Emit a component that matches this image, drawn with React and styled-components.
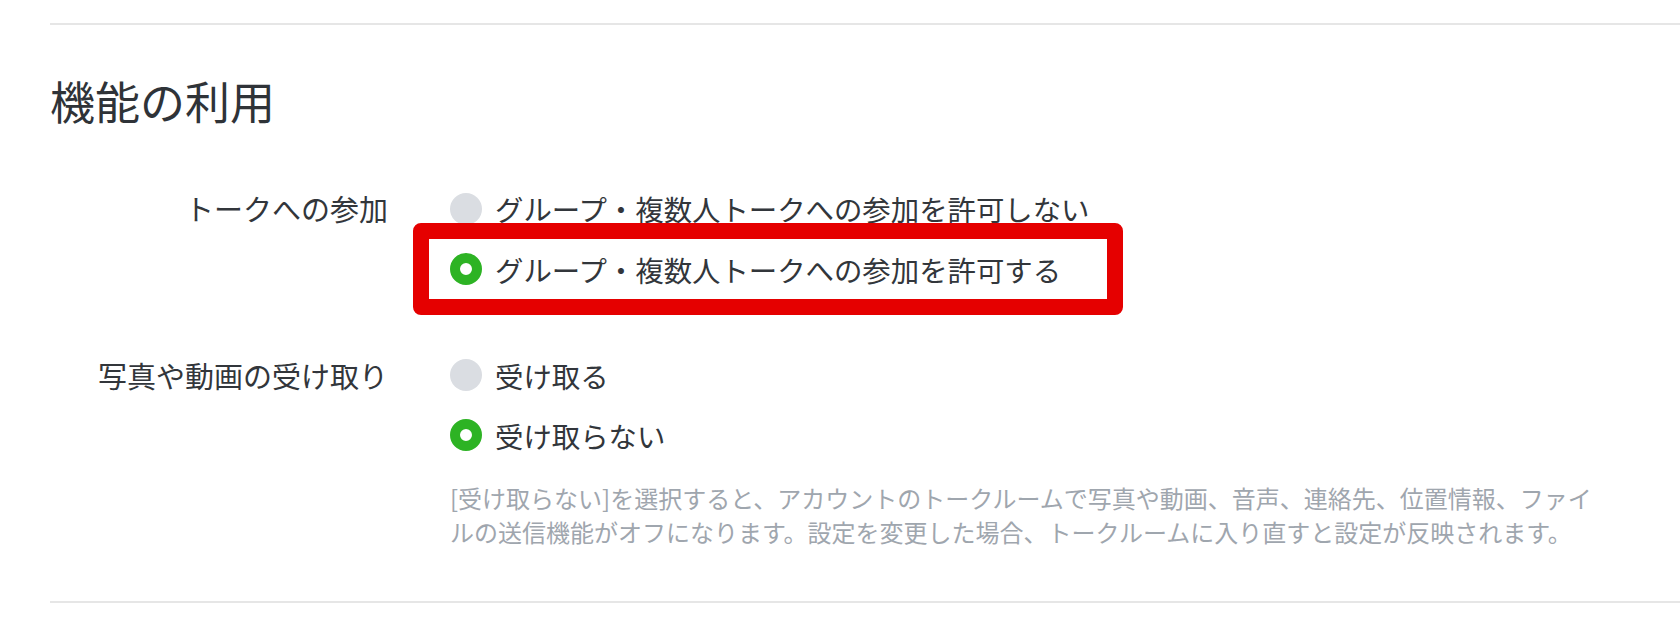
import React from 'react'
import styled, { createGlobalStyle } from 'styled-components'

const GlobalStyle = createGlobalStyle`
  body {
    margin: 0;
    background: #fff;
    font-family: "Noto Sans CJK JP", "Noto Sans", sans-serif;
    color: #32363b;
  }
`

const Section = styled.section`
  margin: 23px 0 0 50px;
  padding: 44px 0 52px;
  border-top: 2px solid #e6e6e6;
  border-bottom: 2px solid #e6e6e6;
`

const Heading = styled.h2`
  margin: 0 0 45px;
  font-size: 45px;
  font-weight: 400;
  line-height: 64px;
  color: #2f3338;
`

const Field = styled.div`
  display: grid;
  grid-template-columns: 338px 1fr;
  column-gap: 62px;
  margin-bottom: ${(props) => props.gap || 0}px;
`

const Label = styled.div`
  font-size: 29px;
  line-height: 60px;
  text-align: right;
  white-space: nowrap;
`

const Options = styled.div`
  display: flex;
  flex-direction: column;
`

const Option = styled.label`
  position: relative;
  display: flex;
  align-items: center;
  gap: 13px;
  height: ${(props) => props.h || 60}px;
  font-size: 28.4px;
  white-space: nowrap;
`

const Radio = styled.span`
  flex: none;
  width: 32px;
  height: 32px;
  border-radius: 50%;
  box-sizing: border-box;
  background: ${(props) => (props.checked ? '#fff' : '#dadde2')};
  border: ${(props) => (props.checked ? '10px solid #2db324' : 'none')};
`

const Highlight = styled.span`
  position: absolute;
  left: -37px;
  top: -16px;
  width: 710px;
  height: 92px;
  box-sizing: border-box;
  border: 16px solid #e50000;
  border-radius: 8px;
  pointer-events: none;
`

const Note = styled.p`
  margin: 16px 0 0;
  font-size: 24px;
  line-height: 34px;
  color: #9fa6ae;
`

const App = () => (
  <>
    <GlobalStyle />
    <Section>
      <Heading>機能の利用</Heading>

      <Field gap={46}>
        <Label>トークへの参加</Label>
        <Options>
          <Option h={61}>
            <Radio />
            グループ・複数人トークへの参加を許可しない
          </Option>
          <Option>
            <Radio checked />
            グループ・複数人トークへの参加を許可する
            <Highlight />
          </Option>
        </Options>
      </Field>

      <Field>
        <Label>写真や動画の受け取り</Label>
        <Options>
          <Option>
            <Radio />
            受け取る
          </Option>
          <Option>
            <Radio checked />
            受け取らない
          </Option>
          <Note>
            [受け取らない]を選択すると、アカウントのトークルームで写真や動画、音声、連絡先、位置情報、ファイ
            <br />
            ルの送信機能がオフになります。設定を変更した場合、トークルームに入り直すと設定が反映されます。
          </Note>
        </Options>
      </Field>
    </Section>
  </>
)

export default App
